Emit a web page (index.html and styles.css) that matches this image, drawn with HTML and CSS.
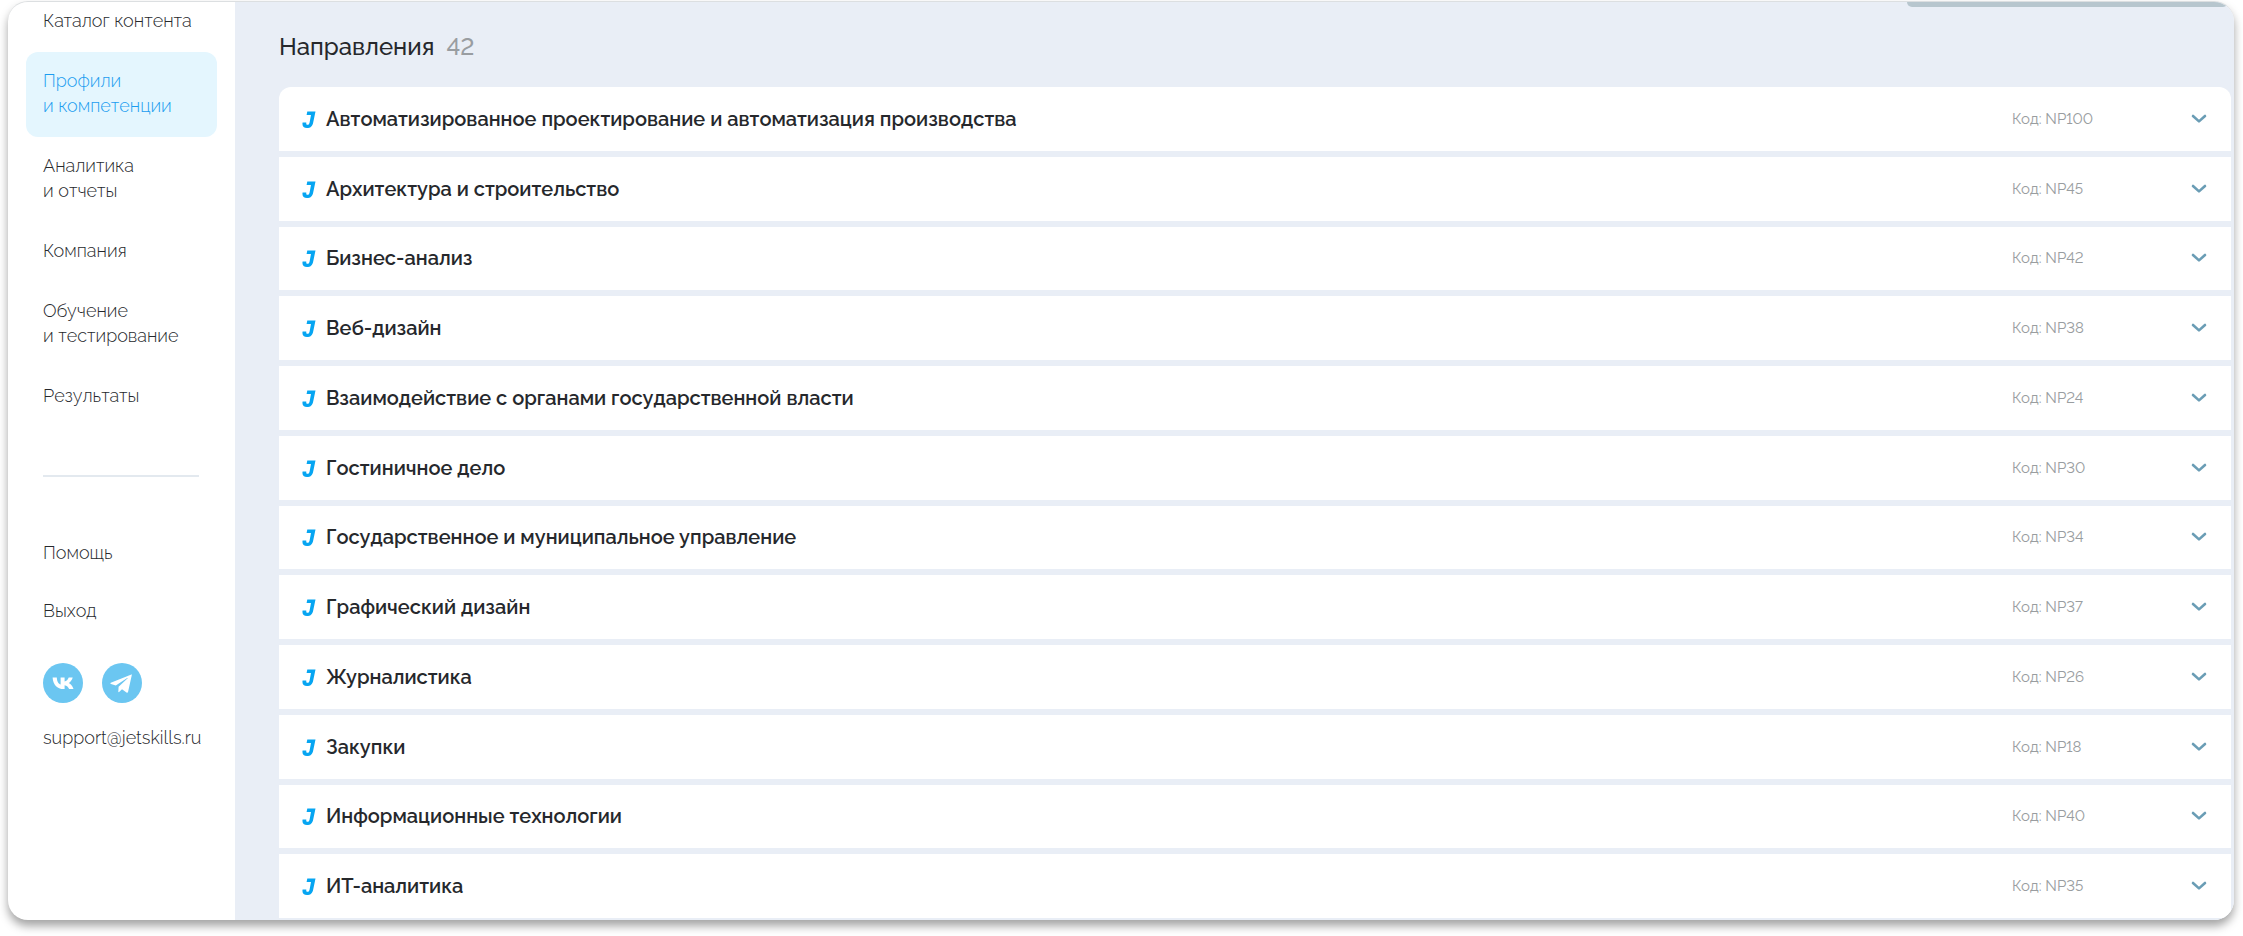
FILE: index.html
```html
<!DOCTYPE html>
<html lang="ru">
<head>
<meta charset="utf-8">
<meta name="viewport" content="width=device-width, initial-scale=1">
<title>Профили и компетенции</title>
<link rel="stylesheet" href="styles.css">
</head>
<body>
<svg class="sprite" aria-hidden="true">
  <symbol id="mark" viewBox="0 0 14 18">
    <path d="M5.300 1.500H13.500L11.200 12.400C10.400 16.400 8.300 18 5 18C1.600 18 -.1 16.200 .6 12.500H4.300C4.100 14 4.500 14.800 5.500 14.800C6.700 14.800 7.200 14.100 7.600 12.400L9 4.900H4.600Z" fill="#06a5f2"/>
  </symbol>
  <symbol id="chevron" viewBox="0 0 16 10">
    <path d="M2 2L8 7.400L14 2" fill="none" stroke="#6a9db5" stroke-width="2.600" stroke-linecap="round" stroke-linejoin="round"/>
  </symbol>
</svg>
<div class="app">
  <aside class="sidebar">
    <nav class="menu">
      <a class="menu-item" href="#">Каталог контента</a>
      <a class="menu-item active" href="#" aria-current="page">Профили<br>и компетенции</a>
      <a class="menu-item" href="#">Аналитика<br>и отчеты</a>
      <a class="menu-item" href="#">Компания</a>
      <a class="menu-item" href="#">Обучение<br>и тестирование</a>
      <a class="menu-item" href="#">Результаты</a>
    </nav>
    <hr class="divider">
    <nav class="service">
      <a class="service-item" href="#">Помощь</a>
      <a class="service-item" href="#">Выход</a>
    </nav>
    <div class="social">
      <a class="social-link" href="#" aria-label="ВКонтакте">
        <svg width="24" height="24" viewBox="0 0 24 24"><path fill="#fff" d="M12.700 18C6 18 2 13.600 1.600 6.400H5.800C6 10.800 7.700 12.900 9.600 13.500V6.400H13.600V10.500C15.300 10.200 17 8.400 17.700 6.400H21.700C21.200 8.900 19.300 11 17.700 12C19.300 12.800 21.500 14.700 22.500 18H18.100C17.400 16 15.800 14.500 13.600 14.200V18Z"/></svg>
      </a>
      <a class="social-link" href="#" aria-label="Telegram">
        <svg width="24" height="24" viewBox="0 0 24 24"><path fill="#fff" d="M21.400 3.400L.800 11.800C.2 12.200.3 12.700 1 13L5.800 14.400L17.200 7.100C17.700 6.800 18.100 7 17.700 7.300L8.600 15.700L8.300 21.200C8.800 21.200 9.100 21 9.400 20.700L12 18.200L16.500 21.600C17.300 22 17.900 21.700 18.100 20.800L21.700 4.600C21.900 3.500 21.700 3.200 21.400 3.400Z"/></svg>
      </a>
    </div>
    <a class="support" href="mailto:support@jetskills.ru">support@jetskills.ru</a>
  </aside>
  <main class="content">
    <div class="top-panel"></div>
    <h1 class="heading">Направления <span class="count">42</span></h1>
    <div class="list">
      <button class="row" type="button"><svg class="mark"><use href="#mark"/></svg><span class="name">Автоматизированное проектирование и автоматизация производства</span><span class="code">Код: NP100</span><svg class="chevron"><use href="#chevron"/></svg></button>
      <button class="row" type="button"><svg class="mark"><use href="#mark"/></svg><span class="name">Архитектура и строительство</span><span class="code">Код: NP45</span><svg class="chevron"><use href="#chevron"/></svg></button>
      <button class="row" type="button"><svg class="mark"><use href="#mark"/></svg><span class="name">Бизнес-анализ</span><span class="code">Код: NP42</span><svg class="chevron"><use href="#chevron"/></svg></button>
      <button class="row" type="button"><svg class="mark"><use href="#mark"/></svg><span class="name">Веб-дизайн</span><span class="code">Код: NP38</span><svg class="chevron"><use href="#chevron"/></svg></button>
      <button class="row" type="button"><svg class="mark"><use href="#mark"/></svg><span class="name">Взаимодействие с органами государственной власти</span><span class="code">Код: NP24</span><svg class="chevron"><use href="#chevron"/></svg></button>
      <button class="row" type="button"><svg class="mark"><use href="#mark"/></svg><span class="name">Гостиничное дело</span><span class="code">Код: NP30</span><svg class="chevron"><use href="#chevron"/></svg></button>
      <button class="row" type="button"><svg class="mark"><use href="#mark"/></svg><span class="name">Государственное и муниципальное управление</span><span class="code">Код: NP34</span><svg class="chevron"><use href="#chevron"/></svg></button>
      <button class="row" type="button"><svg class="mark"><use href="#mark"/></svg><span class="name">Графический дизайн</span><span class="code">Код: NP37</span><svg class="chevron"><use href="#chevron"/></svg></button>
      <button class="row" type="button"><svg class="mark"><use href="#mark"/></svg><span class="name">Журналистика</span><span class="code">Код: NP26</span><svg class="chevron"><use href="#chevron"/></svg></button>
      <button class="row" type="button"><svg class="mark"><use href="#mark"/></svg><span class="name">Закупки</span><span class="code">Код: NP18</span><svg class="chevron"><use href="#chevron"/></svg></button>
      <button class="row" type="button"><svg class="mark"><use href="#mark"/></svg><span class="name">Информационные технологии</span><span class="code">Код: NP40</span><svg class="chevron"><use href="#chevron"/></svg></button>
      <button class="row" type="button"><svg class="mark"><use href="#mark"/></svg><span class="name">ИТ-аналитика</span><span class="code">Код: NP35</span><svg class="chevron"><use href="#chevron"/></svg></button>
    </div>
  </main>
</div>
</body>
</html>
```
FILE: styles.css
```css
* {
  box-sizing: border-box;
}

body {
  display: flex;
  min-height: 100vh;
  margin: 0;
  padding: 1px 9px 16px 8px;
  background: #fff;
  color: #26282c;
  font-family: Raleway, "Open Sans", "Noto Sans", sans-serif;
  font-variant-numeric: lining-nums;
}

a {
  color: inherit;
  text-decoration: none;
}

.sprite {
  position: absolute;
  width: 0;
  height: 0;
}

.app {
  display: flex;
  flex: 1;
  overflow: hidden;
  border-top: 1px solid #dcdfe1;
  border-radius: 20px;
  background: #fff;
  box-shadow: 0 6px 10px rgba(0, 0, 0, 0.36);
}

.sidebar {
  flex: none;
  width: 227px;
  padding: 0 18px;
  font-size: 18px;
  font-weight: 300;
  line-height: 25px;
}

.menu {
  margin-top: -10px;
}

.menu-item {
  display: block;
  padding: 16px 17px 19px;
  border-radius: 12px;
}

.menu-item.active {
  background: #e4f6fe;
  color: #1b9df0;
}

.divider {
  height: 2px;
  margin: 48px 18px 47px 17px;
  border: 0;
  background: #e3e9ef;
}

.service-item {
  display: block;
  padding: 16px 17px 17px;
}

.social {
  display: flex;
  gap: 19px;
  padding: 23px 17px 22px;
}

.social-link {
  display: flex;
  align-items: center;
  justify-content: center;
  width: 40px;
  height: 40px;
  border-radius: 50%;
  background: #6bc6f1;
}

.support {
  padding: 0 17px;
}

.content {
  position: relative;
  display: flex;
  flex: 1;
  flex-direction: column;
  padding: 29px 3px 2px 44px;
  background: #e9eef6;
}

.top-panel {
  position: absolute;
  top: 0;
  right: 6px;
  width: 321px;
  height: 5px;
  border-radius: 0 0 10px 10px;
  background: #b7c6ce;
}

.heading {
  margin: 0 0 24px;
  font-size: 24px;
  font-weight: 500;
  line-height: 32px;
}

.count {
  margin-left: 6px;
  color: #999da1;
}

.list {
  display: flex;
  flex: 1;
  flex-direction: column;
  gap: 6px;
}

.row {
  display: flex;
  flex: 1;
  align-items: center;
  padding: 0 24px 0 23px;
  border: 0;
  background: #fff;
  color: inherit;
  font: inherit;
  font-variant-numeric: lining-nums;
  text-align: left;
}

.row:first-child {
  border-radius: 12px 12px 0 0;
}

.mark {
  width: 14px;
  height: 18px;
  margin-right: 10px;
}

.name {
  flex: 1;
  font-size: 20px;
  font-weight: 600;
  line-height: 28px;
}

.code {
  width: 179px;
  color: #999da0;
  font-size: 15px;
  font-weight: 400;
}

.chevron {
  width: 16px;
  height: 10px;
}
```
